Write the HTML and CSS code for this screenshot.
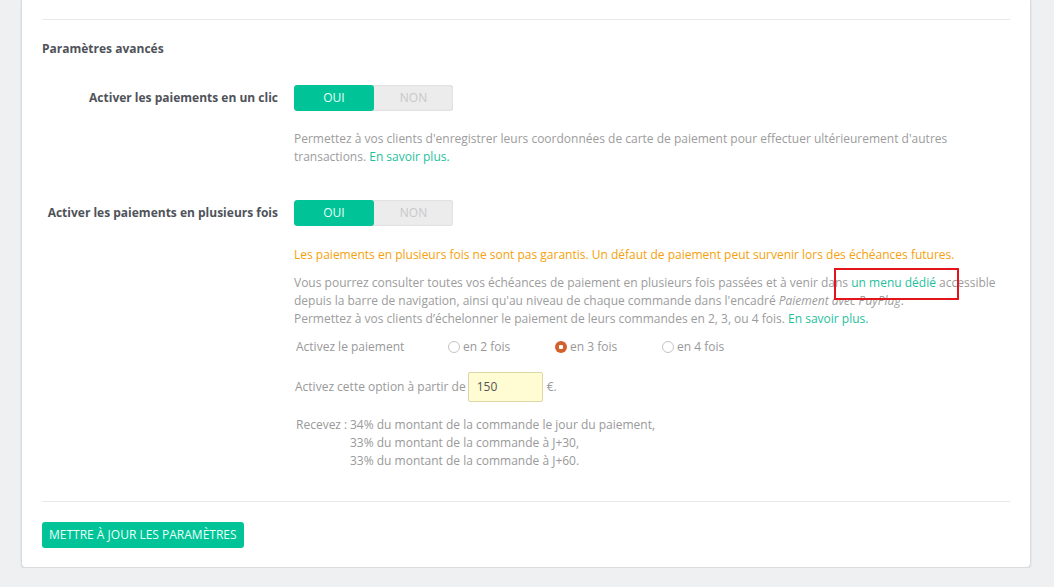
FILE: index.html
```html
<!DOCTYPE html>
<html lang="fr">
<head>
<meta charset="utf-8">
<title>Paramètres avancés</title>
<link rel="stylesheet" href="styles.css">
</head>
<body>
<div class="panel">
  <hr class="sep">
  <h3 class="section-title">Paramètres avancés</h3>

  <div class="form-row row-oneclick">
    <label class="row-label">Activer les paiements en un clic</label>
    <div class="row-body">
      <div class="toggle">
        <span class="toggle-opt on">OUI</span>
        <span class="toggle-opt off">NON</span>
      </div>
      <p class="help help-first">Permettez à vos clients d'enregistrer leurs coordonnées de carte de paiement pour effectuer ultérieurement d'autres transactions. <a class="link" href="#">En savoir plus.</a></p>
    </div>
  </div>

  <div class="form-row row-multi">
    <label class="row-label">Activer les paiements en plusieurs fois</label>
    <div class="row-body">
      <div class="toggle">
        <span class="toggle-opt on">OUI</span>
        <span class="toggle-opt off">NON</span>
      </div>
      <p class="warning">Les paiements en plusieurs fois ne sont pas garantis. Un défaut de paiement peut survenir lors des échéances futures.</p>
      <p class="help help-info">Vous pourrez consulter toutes vos échéances de paiement en plusieurs fois passées et à venir dans <a class="link marked" href="#">un menu dédié</a> accessible depuis la barre de navigation, ainsi qu'au niveau de chaque commande dans l'encadré <em>Paiement avec PayPlug</em>.<br>Permettez à vos clients d’échelonner le paiement de leurs commandes en 2, 3, ou 4 fois. <a class="link" href="#">En savoir plus.</a></p>

      <div class="radio-row">
        <span class="radio-label">Activez le paiement</span>
        <span class="radio-opt"><span class="radio"></span>en 2 fois</span>
        <span class="radio-opt"><span class="radio checked"></span>en 3 fois</span>
        <span class="radio-opt"><span class="radio"></span>en 4 fois</span>
      </div>

      <div class="amount-row">
        <span>Activez cette option à partir de</span>
        <span class="amount-input">150</span>
        <span>€.</span>
      </div>

      <div class="receive">
        <span class="receive-label">Recevez :</span>
        <div class="receive-lines">
          <div>34% du montant de la commande le jour du paiement,</div>
          <div>33% du montant de la commande à J+30,</div>
          <div>33% du montant de la commande à J+60.</div>
        </div>
      </div>
    </div>
  </div>

  <hr class="sep sep-bottom">
  <button class="btn-save">METTRE À JOUR LES PARAMÈTRES</button>
</div>
</body>
</html>
```

FILE: styles.css
```css
html, body {
  margin: 0;
  padding: 0;
}
body {
  background: #eff0f2;
  font-family: "Open Sans", "Liberation Sans", sans-serif;
  font-size: 12px;
  line-height: 18px;
  color: #999;
}
.panel {
  margin-left: 21px;
  width: 968px;
  background: #fff;
  border: 1px solid #d9dcdf;
  border-top: none;
  border-radius: 0 0 5px 5px;
  box-shadow: 0 1px 2px rgba(0, 0, 0, 0.12);
  padding: 19px 20px 19px 20px;
}
.sep {
  border: none;
  border-top: 1px solid #e9e9e9;
  margin: 0;
  height: 0;
}
.section-title {
  margin: 20px 0 0 0;
  font-size: 12px;
  line-height: 18px;
  font-weight: 700;
  color: #4f5359;
}
.form-row {
  display: grid;
  grid-template-columns: 236px 1fr;
  column-gap: 16px;
}
.row-oneclick {
  margin-top: 27px;
}
.row-multi {
  margin-top: 34px;
}
.row-label {
  text-align: right;
  font-weight: 700;
  color: #4f5359;
  line-height: 26px;
}
.toggle {
  display: flex;
  width: 159px;
  height: 26px;
  border-radius: 3px;
  overflow: hidden;
  background: #ececec;
  box-shadow: inset 0 0 2px rgba(0, 0, 0, 0.15);
}
.toggle-opt {
  display: flex;
  align-items: center;
  justify-content: center;
  line-height: 26px;
}
.toggle-opt.on {
  width: 80px;
  background: #00c398;
  color: #e8fff8;
  border-radius: 3px;
}
.toggle-opt.off {
  flex: 1;
  color: #c8c8c8;
}
.help {
  margin: 0;
  color: #9c9c9c;
}
.help-first {
  margin-top: 19px;
}
.warning {
  margin: 20px 0 0 0;
  color: #f5a10b;
}
.help-info {
  margin-top: 10px;
}
.help em {
  font-style: italic;
}
.link {
  color: #1fbf9c;
  text-decoration: none;
}
.marked {
  position: relative;
}
.marked::after {
  content: "";
  position: absolute;
  left: -17px;
  top: -6px;
  width: 121px;
  height: 28px;
  border: 2px solid #e3151b;
}
.radio-row {
  display: flex;
  align-items: center;
  margin-top: 10px;
  padding-left: 2px;
}
.radio-label {
  width: 152px;
}
.radio-opt {
  display: flex;
  align-items: center;
  width: 107px;
}
.radio {
  box-sizing: border-box;
  width: 12px;
  height: 12px;
  border-radius: 50%;
  border: 1px solid #c4c4c4;
  background: #fff;
  margin-right: 3px;
}
.radio.checked {
  border: none;
  background: radial-gradient(circle, #fff 0 2px, #d2612e 2.5px);
}
.amount-row {
  display: flex;
  align-items: center;
  margin-top: 16px;
  padding-left: 1px;
}
.amount-input {
  box-sizing: border-box;
  width: 75px;
  height: 30px;
  margin: 0 4px 0 2px;
  padding-left: 8px;
  border: 1px solid #ddd7a8;
  border-radius: 2px;
  background: #fffbd2;
  color: #555;
  line-height: 28px;
}
.receive {
  display: flex;
  margin-top: 14px;
  padding-left: 2px;
}
.receive-label {
  width: 54px;
}
.sep-bottom {
  margin-top: 31px;
}
.btn-save {
  display: block;
  margin-top: 20px;
  height: 26px;
  padding: 0 7px;
  border: none;
  border-radius: 3px;
  background: #00c398;
  color: #e8fff8;
  font-family: "Open Sans", "Liberation Sans", sans-serif;
  font-size: 12px;
  line-height: 26px;
}
```
